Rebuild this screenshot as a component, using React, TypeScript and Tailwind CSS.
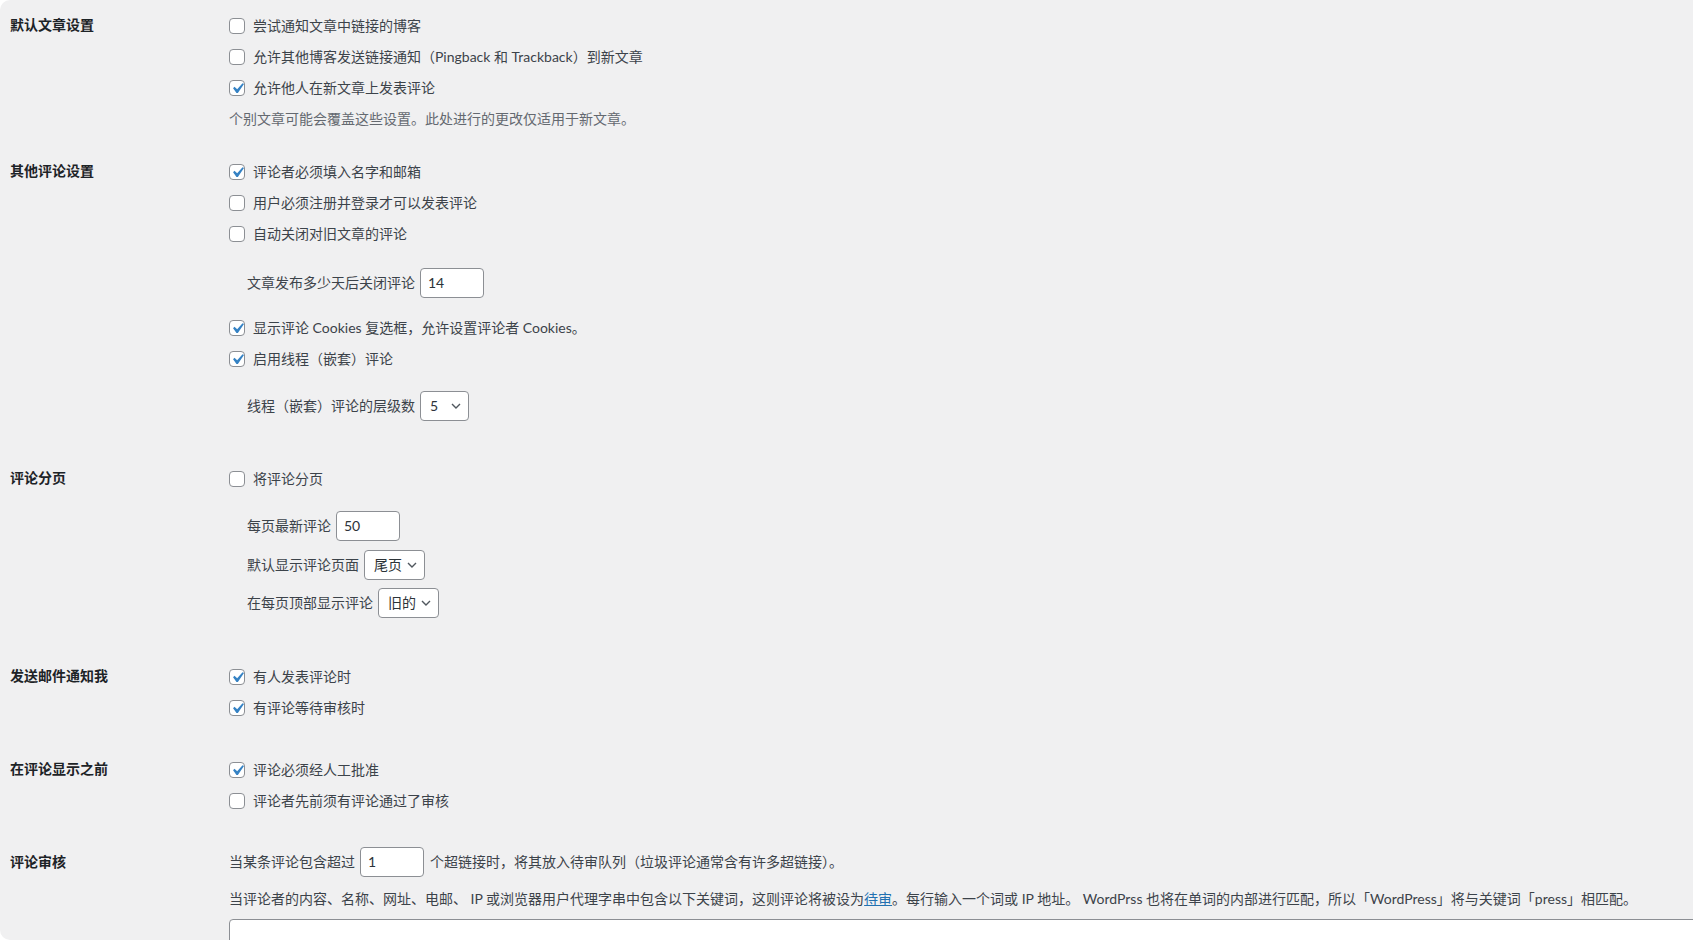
import React from "react";

const Check = () => (
  <svg viewBox="0 0 20 20" className="absolute left-[-3px] top-[-3px] w-[21px] h-[21px]">
    <path d="M14.83 4.89l1.34.94-5.81 8.38H9.02L5.78 9.67l1.34-1.25 2.57 2.4z" fill="#3582c4" />
  </svg>
);

const Box = ({ checked }: { checked?: boolean }) => (
  <span className="relative inline-block w-[16px] h-[16px] shrink-0 rounded-[4px] border border-[#8c8f94] bg-white">
    {checked && <Check />}
  </span>
);

const CheckRow = ({ checked, label }: { checked?: boolean; label: string }) => (
  <div className="h-[31px] flex items-center gap-[8px]">
    <Box checked={checked} />
    <span>{label}</span>
  </div>
);

const Chevron = () => (
  <svg viewBox="0 0 10 6" className="w-[10px] h-[6px]">
    <polyline points="1,1 5,5 9,1" fill="none" stroke="#50575e" strokeWidth="1.4" />
  </svg>
);

const Select = ({ value, w }: { value: string; w: string }) => (
  <div className={`${w} h-[30px] rounded-[4px] border border-[#8c8f94] bg-white flex items-center justify-between pl-[9px] pr-[7px] text-[#2c3338]`}>
    <span>{value}</span>
    <Chevron />
  </div>
);

const Input = ({ value }: { value: string }) => (
  <div className="w-[64px] h-[30px] rounded-[4px] border border-[#8c8f94] bg-white flex items-center pl-[7px] text-[#2c3338]">
    {value}
  </div>
);

const Heading = ({ children }: { children: React.ReactNode }) => (
  <div className="w-[229px] shrink-0 pl-[10px]">
    <div className="h-[29px] flex items-center font-bold text-[#1d2327]">{children}</div>
  </div>
);

export default function App() {
  return (
    <div className="w-full h-[940px] bg-white overflow-hidden">
      <div className="w-full h-[940px] bg-[#f0f0f1] rounded-l-[10px] overflow-hidden pt-[10px] text-[14px] leading-[20px] text-[#3c434a] font-['Lato','Noto_Sans_CJK_SC',sans-serif]">
        {/* 默认文章设置 */}
        <div className="flex">
          <Heading>默认文章设置</Heading>
          <div className="flex flex-col">
            <CheckRow label="尝试通知文章中链接的博客" />
            <CheckRow label="允许其他博客发送链接通知（Pingback 和 Trackback）到新文章" />
            <CheckRow checked label="允许他人在新文章上发表评论" />
            <div className="h-[32px] flex items-center text-[#646970]">个别文章可能会覆盖这些设置。此处进行的更改仅适用于新文章。</div>
          </div>
        </div>

        {/* 其他评论设置 */}
        <div className="flex mt-[21px]">
          <Heading>其他评论设置</Heading>
          <div className="flex flex-col">
            <CheckRow checked label="评论者必须填入名字和邮箱" />
            <CheckRow label="用户必须注册并登录才可以发表评论" />
            <CheckRow label="自动关闭对旧文章的评论" />
            <div className="mt-[19px] h-[29px] flex items-center gap-[5px] pl-[18px]">
              <span>文章发布多少天后关闭评论</span>
              <Input value="14" />
            </div>
            <div className="mt-[15px]">
              <CheckRow checked label="显示评论 Cookies 复选框，允许设置评论者 Cookies。" />
              <CheckRow checked label="启用线程（嵌套）评论" />
            </div>
            <div className="mt-[17px] h-[29px] flex items-center gap-[5px] pl-[18px]">
              <span>线程（嵌套）评论的层级数</span>
              <Select value="5" w="w-[49px]" />
            </div>
          </div>
        </div>

        {/* 评论分页 */}
        <div className="flex mt-[43px]">
          <Heading>评论分页</Heading>
          <div className="flex flex-col">
            <CheckRow label="将评论分页" />
            <div className="mt-[17px] h-[30px] flex items-center gap-[5px] pl-[18px]">
              <span>每页最新评论</span>
              <Input value="50" />
            </div>
            <div className="mt-[9px] h-[30px] flex items-center gap-[5px] pl-[18px]">
              <span>默认显示评论页面</span>
              <Select value="尾页" w="w-[61px]" />
            </div>
            <div className="mt-[8px] h-[30px] flex items-center gap-[5px] pl-[18px]">
              <span>在每页顶部显示评论</span>
              <Select value="旧的" w="w-[61px]" />
            </div>
          </div>
        </div>

        {/* 发送邮件通知我 */}
        <div className="flex mt-[43px]">
          <Heading>发送邮件通知我</Heading>
          <div className="flex flex-col">
            <CheckRow checked label="有人发表评论时" />
            <CheckRow checked label="有评论等待审核时" />
          </div>
        </div>

        {/* 在评论显示之前 */}
        <div className="flex mt-[31px]">
          <Heading>在评论显示之前</Heading>
          <div className="flex flex-col">
            <CheckRow checked label="评论必须经人工批准" />
            <CheckRow label="评论者先前须有评论通过了审核" />
          </div>
        </div>

        {/* 评论审核 */}
        <div className="flex mt-[31px]">
          <Heading>评论审核</Heading>
          <div className="flex flex-col">
            <div className="h-[29px] flex items-center gap-[5px]">
              <span>当某条评论包含超过</span>
              <Input value="1" />
              <span className="ml-[1px]">个超链接时，将其放入待审队列（垃圾评论通常含有许多超链接）。</span>
            </div>
            <div className="mt-[13px] h-[20px] flex items-center whitespace-nowrap">
              <span>
                当评论者的内容、名称、网址、电邮、 IP 或浏览器用户代理字串中包含以下关键词，这则评论将被设为
                <span className="text-[#2271b1] underline">待审</span>
                。每行输入一个词或 IP 地址。 WordPrss 也将在单词的内部进行匹配，所以「WordPress」将与关键词「press」相匹配。
              </span>
            </div>
            <div className="mt-[10px] w-[1500px] h-[80px] rounded-[4px] border border-[#8c8f94] bg-white" />
          </div>
        </div>
      </div>
    </div>
  );
}
